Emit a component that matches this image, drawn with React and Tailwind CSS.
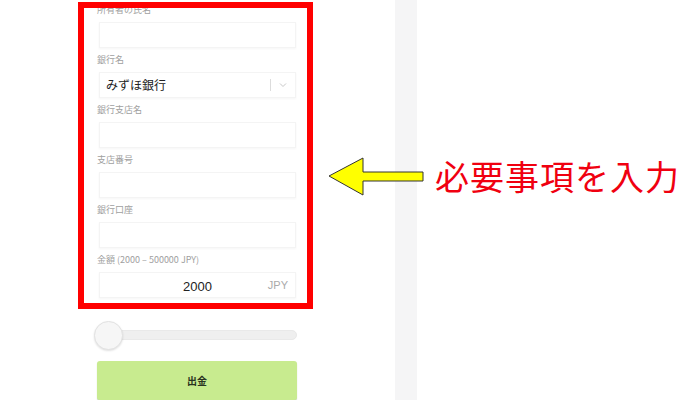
import React from 'react';

const jp = {fontFamily: '"Noto Sans CJK JP", "Noto Sans", sans-serif'};
const latin = {fontFamily: '"Liberation Sans", Arial, sans-serif'};

const fields = [
    {label: '所有者の氏名'},
    {label: '銀行名', select: 'みずほ銀行'},
    {label: '銀行支店名'},
    {label: '支店番号'},
    {label: '銀行口座'},
    {label: '金額 (2000 – 500000 JPY)', amount: '2000'},
];

function Field({field}) {
    return (
        <div className="flex flex-col">
            <div className="h-[12px] text-[9px] leading-[12px] text-[#a0a0a0]">{field.label}</div>
            <div
                className="relative mt-[6px] ml-[2px] w-[197px] h-[26px] bg-white border border-[#f4f4f4] shadow-[0_1px_2px_rgba(0,0,0,0.04)] flex items-center">
                {field.select && (
                    <>
                        <span className="flex-grow pl-[6px] text-[12px] text-[#222]">{field.select}</span>
                        <span className="w-px h-[12px] bg-[#dcdcdc]"/>
                        <svg width="8" height="6" viewBox="0 0 8 6" className="mx-[8px]">
                            <path d="M1 1.5 L4 4.5 L7 1.5" fill="none" stroke="#c8c8c8" strokeWidth="1"/>
                        </svg>
                    </>
                )}
                {field.amount && (
                    <>
                        <span className="absolute inset-x-0 pt-[3px] text-center text-[13px] text-[#222]"
                              style={latin}>{field.amount}</span>
                        <span className="ml-auto pr-[7px] text-[11px] text-[#aaa]" style={latin}>JPY</span>
                    </>
                )}
            </div>
        </div>
    );
}

export default function App() {
    return (
        <div className="relative w-[700px] h-[400px] overflow-hidden bg-white flex" style={jp}>
            <div className="ml-[97px] w-[200px] pt-[4px] flex flex-col">
                <div className="flex flex-col gap-[6px]">
                    {fields.map((f) => <Field key={f.label} field={f}/>)}
                </div>
                <div className="mt-[23px] relative h-[29px] flex items-center">
                    <div className="ml-[11px] flex-grow h-[10px] rounded-full bg-[#efefef] border border-[#e9e9e9]"/>
                    <div
                        className="absolute left-[-3px] top-0 w-[29px] h-[29px] rounded-full bg-[#f6f6f6] border border-[#e2e2e2] shadow-[0_1px_2px_rgba(0,0,0,0.12)]"/>
                </div>
                <button
                    className="mt-[11px] h-[40px] w-[200px] rounded-[3px] bg-[#c8eb8f] shadow-[0_1px_1px_rgba(90,130,40,0.35)] text-[10px] font-bold text-[#2a3320]">
                    出金
                </button>
            </div>
            <div className="ml-[98px] w-[22px] h-full bg-[#f5f5f6]"/>

            {/* annotation */}
            <div className="absolute left-[78px] top-[2px] w-[235px] h-[307px] border-[6px] border-[#ff0000]"/>
            <svg className="absolute left-[326px] top-[154px]" width="100" height="45" viewBox="326 154 100 45">
                <polygon points="329,176 363,158 363,172 423,172 423,181 363,181 363,195"
                         fill="#ffff00" stroke="#333" strokeWidth="1"/>
            </svg>
            <div className="absolute left-[435px] top-[154px] h-[44px] flex items-center text-[34px] leading-none text-[#f00010] tracking-[1px]">
                必要事項を入力
            </div>
        </div>
    );
}
